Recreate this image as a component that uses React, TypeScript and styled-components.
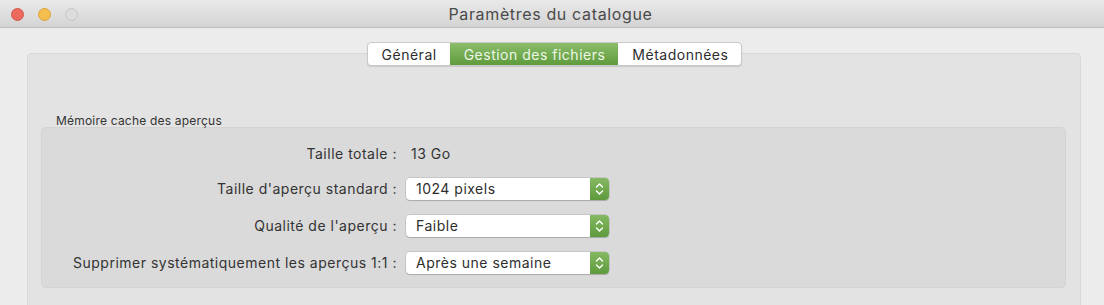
import React from "react";
import styled, { createGlobalStyle } from "styled-components";

const GlobalStyle = createGlobalStyle`
  html, body {
    margin: 0;
    padding: 0;
    background: #ececec;
    overflow: hidden;
  }
  body {
    font-family: Inter, "Liberation Sans", sans-serif;
    -webkit-font-smoothing: antialiased;
  }
`;

const rows = [
  { label: "Taille d'aperçu standard :", value: "1024 pixels" },
  { label: "Qualité de l'aperçu :", value: "Faible" },
  { label: "Supprimer systématiquement les aperçus 1:1 :", value: "Après une semaine" },
];

const tabs = ["Général", "Gestion des fichiers", "Métadonnées"];

function Stepper() {
  return (
    <svg width="9" height="14" viewBox="0 0 9 14">
      <path
        d="M1.5 5 L4.5 2 L7.5 5 M1.5 9 L4.5 12 L7.5 9"
        fill="none"
        stroke="#fff"
        strokeWidth="1.4"
        strokeLinecap="round"
        strokeLinejoin="round"
      />
    </svg>
  );
}

function App() {
  const active = 1;
  return (
    <>
      <GlobalStyle />
      <Window>
        <TitleBar>
          <Lights>
            <Light $color="#ed6a5e" $border="#d5554a" />
            <Light $color="#f5bf4f" $border="#d9a23a" />
            <Light $color="#dcdcdc" $border="#c6c6c6" />
          </Lights>
          <Title>Paramètres du catalogue</Title>
        </TitleBar>

        <Body>
          <Panel>
            <TabBar>
              <Segmented>
                {tabs.map((t, i) => (
                  <Tab key={t} $active={i === active}>
                    {t}
                  </Tab>
                ))}
              </Segmented>
            </TabBar>

            <GroupLabel>Mémoire cache des aperçus</GroupLabel>
            <GroupBox>
              <Form>
                <Label $static>Taille totale :</Label>
                <StaticValue>13 Go</StaticValue>
                {rows.map((r) => (
                  <React.Fragment key={r.label}>
                    <Label>{r.label}</Label>
                    <Select>
                      <SelectText>{r.value}</SelectText>
                      <SelectArrow>
                        <Stepper />
                      </SelectArrow>
                    </Select>
                  </React.Fragment>
                ))}
              </Form>
            </GroupBox>
          </Panel>
        </Body>
      </Window>
    </>
  );
}

const Window = styled.div`
  width: 1104px;
  height: 305px;
  background: #ececec;
  display: flex;
  flex-direction: column;
`;

const TitleBar = styled.div`
  height: 27px;
  flex-shrink: 0;
  position: relative;
  display: flex;
  align-items: center;
  justify-content: center;
  background: linear-gradient(#e9e9e9, #d4d4d4);
  border-bottom: 1px solid #bdbdbd;
`;

const Lights = styled.div`
  position: absolute;
  left: 11px;
  top: 8px;
  display: flex;
  gap: 14px;
`;

const Light = styled.div<{ $color: string; $border: string }>`
  width: 11px;
  height: 11px;
  border-radius: 50%;
  background: ${(p) => p.$color};
  border: 1px solid ${(p) => p.$border};
`;

const Title = styled.div`
  font-size: 16px;
  color: #4a4a4a;
  letter-spacing: 0.65px;
  padding-right: 3px;
`;

const Body = styled.div`
  flex: 1;
  padding: 25px 23px 0 27px;
`;

const Panel = styled.div`
  height: 100%;
  background: #e3e3e3;
  border: 1px solid #d8d8d8;
  border-bottom: none;
  border-radius: 5px 5px 0 0;
  padding: 0 14px 0 13px;
  box-sizing: border-box;
`;

const TabBar = styled.div`
  display: flex;
  justify-content: center;
  margin-top: -12px;
  padding-left: 2px;
`;

const Segmented = styled.div`
  display: flex;
  height: 22px;
  background: #fff;
  border: 1px solid #c9c9c9;
  border-radius: 4px;
  box-shadow: 0 1px 1px rgba(0, 0, 0, 0.12);
  overflow: hidden;
`;

const Tab = styled.div<{ $active?: boolean }>`
  display: flex;
  align-items: center;
  padding: 0 13px 0 14px;
  font-size: 14px;
  letter-spacing: 0.5px;
  color: ${(p) => (p.$active ? "#eef6e8" : "#2e2e2e")};
  background: ${(p) =>
    p.$active ? "linear-gradient(#8bbd6a, #5f9b3d)" : "transparent"};
`;

const GroupLabel = styled.div`
  margin: 48px 0 0 15px;
  font-size: 12px;
  line-height: 14px;
  letter-spacing: 0.2px;
  color: #333;
`;

const GroupBox = styled.div`
  margin-top: -1px;
  height: 161px;
  background: #dadada;
  border: 1px solid #d3d3d3;
  border-radius: 5px;
  box-sizing: border-box;
`;

const Form = styled.div`
  display: grid;
  grid-template-columns: 357px 203px;
  column-gap: 7px;
  row-gap: 15px;
  padding-top: 17px;
  align-items: center;
  letter-spacing: 0.5px;
`;

const Label = styled.div<{ $static?: boolean }>`
  text-align: right;
  font-size: 14px;
  line-height: ${(p) => (p.$static ? "18px" : "22px")};
  color: #333;
  padding-right: 2px;
`;

const StaticValue = styled.div`
  font-size: 14px;
  line-height: 18px;
  color: #333;
  padding-left: 5px;
`;

const Select = styled.div`
  height: 22px;
  display: flex;
  background: #fff;
  border-radius: 4px;
  box-shadow: 0 0 0 0.5px rgba(0, 0, 0, 0.18), 0 1px 1px rgba(0, 0, 0, 0.15);
  overflow: hidden;
`;

const SelectText = styled.div`
  flex: 1;
  padding-left: 10px;
  font-size: 14px;
  line-height: 22px;
  color: #2e2e2e;
`;

const SelectArrow = styled.div`
  width: 19px;
  display: flex;
  align-items: center;
  justify-content: center;
  background: linear-gradient(#85b963, #5e9a3c);
`;

export default App;
